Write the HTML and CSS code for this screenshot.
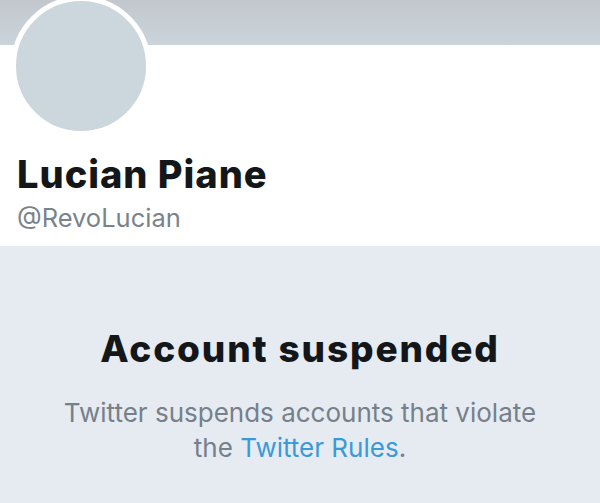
FILE: index.html
```html
<!DOCTYPE html>
<html>
<head>
<meta charset="utf-8">
<link rel="stylesheet" href="styles.css">
</head>
<body>
<div class="profile">
  <div class="banner"></div>
  <div class="info">
    <div class="avatar"></div>
    <div class="name">Lucian Piane</div>
    <div class="handle">@RevoLucian</div>
  </div>
</div>
<div class="suspended">
  <div class="title">Account suspended</div>
  <div class="desc">Twitter suspends accounts that violate<br>the <a class="link">Twitter Rules</a>.</div>
</div>
</body>
</html>
```
FILE: styles.css
```css
html, body {
  margin: 0;
  padding: 0;
}
body {
  width: 600px;
  height: 503px;
  overflow: hidden;
  background: #e6ebf1;
  font-family: Inter, "Liberation Sans", sans-serif;
}
.profile {
  background: #ffffff;
  height: 246px;
  position: relative;
}
.banner {
  height: 45px;
  background: linear-gradient(#c2c7cd, #cbd4db);
}
.info {
  padding-left: 17px;
}
.avatar {
  position: absolute;
  left: 11px;
  top: -4px;
  width: 130px;
  height: 130px;
  border: 5px solid #ffffff;
  border-radius: 50%;
  background: #ccd6dd;
}
.name {
  margin-top: 107px;
  font-size: 38px;
  font-weight: 800;
  color: #14171a;
  line-height: 44px;
  letter-spacing: 1px;
}
.handle {
  margin-top: 8px;
  font-size: 25.5px;
  color: #7a838c;
  line-height: 28px;
}
.suspended {
  text-align: center;
  padding-top: 83px;
}
.title {
  font-size: 37px;
  font-weight: 800;
  color: #14171a;
  line-height: 40px;
  letter-spacing: 1.85px;
}
.desc {
  margin-top: 26px;
  font-size: 26px;
  line-height: 35px;
  color: #75808a;
}
.link {
  color: #3a9ad9;
}
```
